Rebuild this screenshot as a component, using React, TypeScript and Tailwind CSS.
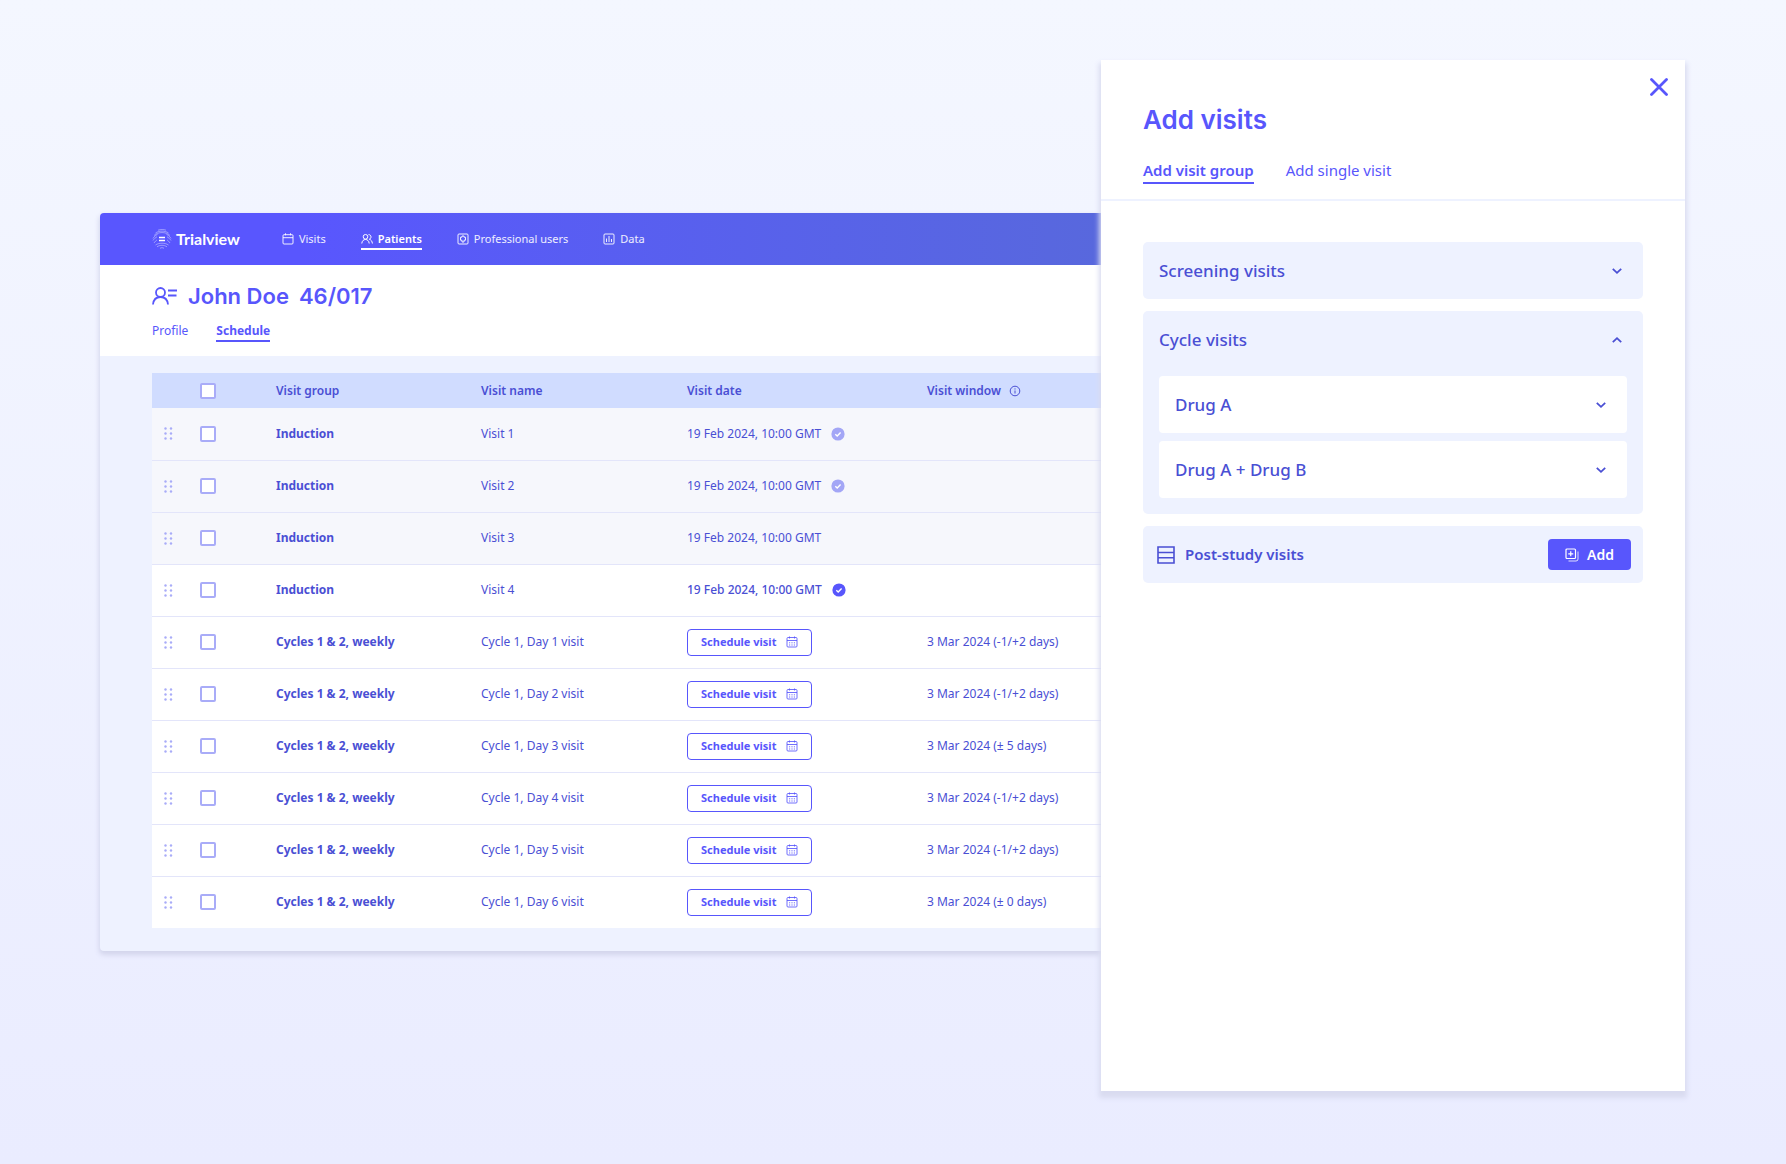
import { useState } from "react";
import type { ReactNode } from "react";

const BODY = "font-['Noto_Sans','Open_Sans',sans-serif]";

type Visit = {
  group: string;
  name: string;
  date?: string;
  status?: "past" | "confirmed";
  window?: string;
  muted?: boolean;
};

const DATE = "19 Feb 2024, 10:00 GMT";
const CYCLE = "Cycles 1 & 2, weekly";

const visits: Visit[] = [
  { group: "Induction", name: "Visit 1", date: DATE, status: "past", muted: true },
  { group: "Induction", name: "Visit 2", date: DATE, status: "past", muted: true },
  { group: "Induction", name: "Visit 3", date: DATE, muted: true },
  { group: "Induction", name: "Visit 4", date: DATE, status: "confirmed" },
  { group: CYCLE, name: "Cycle 1, Day 1 visit", window: "3 Mar 2024 (-1/+2 days)" },
  { group: CYCLE, name: "Cycle 1, Day 2 visit", window: "3 Mar 2024 (-1/+2 days)" },
  { group: CYCLE, name: "Cycle 1, Day 3 visit", window: "3 Mar 2024 (± 5 days)" },
  { group: CYCLE, name: "Cycle 1, Day 4 visit", window: "3 Mar 2024 (-1/+2 days)" },
  { group: CYCLE, name: "Cycle 1, Day 5 visit", window: "3 Mar 2024 (-1/+2 days)" },
  { group: CYCLE, name: "Cycle 1, Day 6 visit", window: "3 Mar 2024 (± 0 days)" },
];

function LogoMark() {
  return (
    <svg width="20" height="20" viewBox="0 0 20 20" fill="none" stroke="white" aria-hidden="true">
      <g strokeOpacity="0.5" strokeWidth="0.8">
        <path d="M6 1.200C8.500 0.300 12 0.300 14 1.200" />
        <path d="M3.500 4C7 1.500 13 1.500 16.500 4" />
        <path d="M2 6.500C6 2.600 14 2.600 18 6.500" />
        <path d="M1 9.500C2.500 7 4 6 5.500 5.500M19 9.500C17.500 7 16 6 14.500 5.500" />
        <path d="M1 11.500C2 10 3.500 8.500 5 7.800M19 11.500C18 10 16.500 8.500 15 7.800" />
        <path d="M2 14C3 12.500 4 11.500 5 11M18 14C17 12.500 16 11.500 15 11" />
        <path d="M3.500 16C7 13.600 13 13.600 16.500 16" />
        <path d="M5 17.800C8 15.800 12 15.800 15 17.800" />
        <path d="M8 19.300C9.500 18.500 10.500 18.500 12 19.300" />
      </g>
      <path d="M7 8.500h6M7 11.500h6" strokeWidth="1.500" />
    </svg>
  );
}

function CalendarIcon() {
  return (
    <svg width="12" height="12" viewBox="0 0 12 12" fill="none" stroke="currentColor" aria-hidden="true">
      <rect x="1" y="1.700" width="10" height="9.300" rx="1" />
      <path d="M1 4.700h10M3.500 0.300v2M8.500 0.300v2" />
    </svg>
  );
}

function PeopleIcon() {
  return (
    <svg width="12" height="12" viewBox="0 0 12 12" fill="none" stroke="currentColor" aria-hidden="true">
      <circle cx="4.500" cy="3.800" r="2.300" />
      <path d="M0.800 10.500C1 7.800 2.600 6.500 4.500 6.500S8 7.800 8.200 10.500M7.500 1.600C9.200 1.600 10 2.700 10 3.900S9.300 5.900 8.300 6.200C10 6.700 11.200 8.200 11.400 10.500" />
    </svg>
  );
}

function ProfessionalIcon() {
  return (
    <svg width="12" height="12" viewBox="0 0 12 12" fill="none" stroke="currentColor" aria-hidden="true">
      <rect x="1" y="1" width="10" height="10" rx="1" />
      <path d="M5 3h2v1.200h1.500v3H7V9H5V7.200H3.500v-3H5z" />
    </svg>
  );
}

function ChartIcon() {
  return (
    <svg width="12" height="12" viewBox="0 0 12 12" fill="none" stroke="currentColor" aria-hidden="true">
      <rect x="1" y="1" width="10" height="10" rx="1" />
      <path d="M3.500 5.500v3.500M6 3v6M8.500 6v3" />
    </svg>
  );
}

function PatientIcon() {
  return (
    <svg width="26" height="18" viewBox="0 0 26 18" fill="none" stroke="#5856fc" strokeWidth="1.800" aria-hidden="true">
      <circle cx="8.500" cy="5.500" r="4.500" />
      <path d="M1 17.500C1.500 12.500 4.500 10 8.500 10S15.500 12.500 16 17.500M16 3.500h9M16 8.500h8.500" />
    </svg>
  );
}

function GripIcon() {
  return (
    <svg width="9" height="13" viewBox="0 0 9 13" fill="#a9acf8" aria-hidden="true">
      <circle cx="1.500" cy="1.500" r="1.200" />
      <circle cx="7" cy="1.500" r="1.200" />
      <circle cx="1.500" cy="6.500" r="1.200" />
      <circle cx="7" cy="6.500" r="1.200" />
      <circle cx="1.500" cy="11.500" r="1.200" />
      <circle cx="7" cy="11.500" r="1.200" />
    </svg>
  );
}

function StatusIcon({ status }: { status: "past" | "confirmed" }) {
  return (
    <svg width="14" height="14" viewBox="0 0 14 14" fill="none" role="img" aria-label={status}>
      <circle cx="7" cy="7" r="6.600" fill={status === "past" ? "#a3a6f6" : "#5856fc"} />
      <path d="M4.300 7.200l1.900 1.800 3.400-3.500" stroke="white" strokeWidth="1.400" />
    </svg>
  );
}

function ScheduleIcon() {
  return (
    <svg width="12" height="12" viewBox="0 0 12 12" fill="none" stroke="currentColor" strokeOpacity="0.850" aria-hidden="true">
      <rect x="1" y="1.500" width="10" height="9.500" rx="1" />
      <path d="M1 4.500h10M3.500 0.500v2M8.500 0.500v2" />
      <path d="M3 6.800h1.200M5.400 6.800h1.200M7.800 6.800H9M3 9h1.200M5.400 9h1.200M7.800 9H9" />
    </svg>
  );
}

function InfoIcon() {
  return (
    <svg width="12" height="12" viewBox="0 0 12 12" fill="none" stroke="currentColor" aria-hidden="true">
      <circle cx="6" cy="6" r="4.800" />
      <path d="M6 5.500v3M6 3.400v1.100" />
    </svg>
  );
}

function Chevron({ up = false }: { up?: boolean }) {
  return (
    <svg width="12" height="8" viewBox="0 0 12 8" fill="none" stroke="currentColor" strokeWidth="1.800" aria-hidden="true">
      <path d={up ? "M1.800 6.200L6 2.200l4.200 4" : "M1.800 1.800L6 5.800l4.200-4"} />
    </svg>
  );
}

function StackIcon() {
  return (
    <svg width="18" height="18" viewBox="0 0 18 18" fill="none" stroke="#4a4fd4" strokeWidth="1.600" aria-hidden="true">
      <path d="M1 1h16v16H1zM1 6.500h16M1 11.700h16" />
    </svg>
  );
}

function AddIcon() {
  return (
    <svg width="14" height="14" viewBox="0 0 14 14" fill="none" stroke="currentColor" aria-hidden="true">
      <rect x="1" y="1" width="9.500" height="9.500" rx="1" strokeWidth="1.200" />
      <path d="M5.750 3.300v5M3.250 5.800h5" strokeWidth="1.200" />
      <path d="M13 3.500v7.500a2 2 0 0 1-2 2H3.500" strokeOpacity="0.800" />
    </svg>
  );
}

function NavItem({ icon, label, active = false }: { icon: ReactNode; label: string; active?: boolean }) {
  return (
    <a
      href="#"
      aria-current={active ? "page" : undefined}
      className={
        active
          ? "flex items-center gap-[5px] border-y-2 border-t-transparent border-b-white font-semibold text-white"
          : "flex items-center gap-[5px] border-y-2 border-transparent text-white/90"
      }
    >
      {icon}
      {label}
    </a>
  );
}

function Checkbox({ label }: { label: string }) {
  return (
    <input
      type="checkbox"
      aria-label={label}
      className="block size-4 appearance-none rounded-[2px] border-2 border-[#a9acf8] bg-white checked:bg-[#5856fc]"
    />
  );
}

function VisitRow({ visit }: { visit: Visit }) {
  return (
    <tr
      className={
        visit.muted
          ? "h-[52px] border-b border-[#e3e5fa] bg-[#f6f7fc]"
          : "h-[52px] border-b border-[#e3e5fa] bg-white last:border-b-0"
      }
    >
      <td className="pl-3">
        <button type="button" aria-label={"Move " + visit.name} className="block">
          <GripIcon />
        </button>
      </td>
      <td className="pl-4">
        <Checkbox label={"Select " + visit.name} />
      </td>
      <td className="font-bold">{visit.group}</td>
      <td>{visit.name}</td>
      <td>
        {visit.date ? (
          <span className={visit.status === "confirmed" ? "flex items-center gap-[10px] font-medium" : "flex items-center gap-[10px]"}>
            {visit.date}
            {visit.status && <StatusIcon status={visit.status} />}
          </span>
        ) : (
          <button
            type="button"
            className="flex h-[27px] items-center gap-[10px] rounded-[4px] border border-[#5856fc] bg-white px-[13px] text-[11px] font-bold text-[#5856fc]"
          >
            Schedule visit
            <ScheduleIcon />
          </button>
        )}
      </td>
      <td>{visit.window}</td>
    </tr>
  );
}

function PatientWindow() {
  return (
    <section className="mt-[153px] min-w-0 flex-1 self-start overflow-clip rounded-l-[4px] bg-[#eef2ff] shadow-[0_3px_5px_1px_#d3d5ec]">
      <header className="flex h-[52px] items-center bg-gradient-to-r from-[#5956fe] from-20% to-[#5868dd] pl-[52px]">
        <a href="#" className="flex items-center gap-1 font-['Lato',sans-serif] text-[16px] font-bold text-white">
          <LogoMark />
          Trialview
        </a>
        <nav className="ml-[42px] flex gap-[35px] text-[11px] leading-[18px]">
          <NavItem icon={<CalendarIcon />} label="Visits" />
          <NavItem icon={<PeopleIcon />} label="Patients" active />
          <NavItem icon={<ProfessionalIcon />} label="Professional users" />
          <NavItem icon={<ChartIcon />} label="Data" />
        </nav>
      </header>

      <div className="bg-white pt-[17px] pb-[14px] pl-[52px] text-[#5856fc]">
        <h1 className="flex items-center gap-[10px] font-['Inter',sans-serif] text-[22px] leading-7 font-semibold">
          <PatientIcon />
          <span>John Doe</span>
          <span>46/017</span>
        </h1>
        <nav className="mt-[11px] flex gap-7 text-[12px] leading-[19px]">
          <a href="#" className="border-b-2 border-transparent">
            Profile
          </a>
          <a href="#" aria-current="page" className="border-b-2 border-[#5856fc] font-bold">
            Schedule
          </a>
        </nav>
      </div>

      <div className="pt-[17px] pb-[23px] pl-[52px]">
        <table className="w-full table-fixed text-left text-[12px] text-[#4a4fd4]">
          <colgroup>
            <col className="w-8" />
            <col className="w-[92px]" />
            <col className="w-[205px]" />
            <col className="w-[206px]" />
            <col className="w-[240px]" />
            <col />
          </colgroup>
          <thead>
            <tr className="h-[35px] bg-[#d0dcff]">
              <td />
              <th className="pl-4">
                <Checkbox label="Select all visits" />
              </th>
              <th className="font-semibold">Visit group</th>
              <th className="font-semibold">Visit name</th>
              <th className="font-semibold">Visit date</th>
              <th className="font-semibold">
                <span className="flex items-center gap-2">
                  Visit window
                  <InfoIcon />
                </span>
              </th>
            </tr>
          </thead>
          <tbody>
            {visits.map((visit) => (
              <VisitRow key={visit.name} visit={visit} />
            ))}
          </tbody>
        </table>
      </div>
    </section>
  );
}

function AccordionButton({ label, open, onToggle }: { label: string; open: boolean; onToggle: () => void }) {
  return (
    <button
      type="button"
      aria-expanded={open}
      onClick={onToggle}
      className="flex h-[57px] w-full items-center justify-between pr-5 pl-4 text-[17px] font-medium"
    >
      {label}
      <Chevron up={open} />
    </button>
  );
}

function AddVisitsDrawer() {
  const [open, setOpen] = useState<Record<string, boolean>>({ cycle: true });
  const toggle = (key: string) => setOpen((state) => ({ ...state, [key]: !state[key] }));

  return (
    <aside className="relative w-[584px] shrink-0 bg-white text-[#4a4fd4] shadow-[0_5px_5px_2px_#d9dbf0]">
      <div className="border-b-2 border-[#eef2ff] pr-[17px] pl-[42px] text-[#5856fc]">
        <div className="flex justify-end pt-[18px]">
          <button type="button" aria-label="Close">
            <svg width="18" height="18" viewBox="0 0 18 18" fill="none" stroke="currentColor" strokeWidth="2.800" strokeLinecap="round" aria-hidden="true">
              <path d="M1.500 1.500l15 15M16.500 1.500l-15 15" />
            </svg>
          </button>
        </div>
        <h2 className="mt-2 font-['Inter',sans-serif] text-[26px] leading-8 font-semibold">Add visits</h2>
        <div role="tablist" className="mt-[22px] flex gap-8 pb-[15px] text-[15px] leading-6">
          <button type="button" role="tab" aria-selected="true" className="border-b-2 border-[#5856fc] font-semibold">
            Add visit group
          </button>
          <button type="button" role="tab" aria-selected="false" className="border-b-2 border-transparent">
            Add single visit
          </button>
        </div>
      </div>

      <div className="flex flex-col gap-3 px-[42px] pt-[41px]">
        <div className="rounded-[5px] bg-[#eef2ff]">
          <AccordionButton label="Screening visits" open={!!open.screening} onToggle={() => toggle("screening")} />
        </div>
        <div className="rounded-[5px] bg-[#eef2ff]">
          <AccordionButton label="Cycle visits" open={!!open.cycle} onToggle={() => toggle("cycle")} />
          {open.cycle && (
            <div className="flex flex-col gap-2 px-4 pt-2 pb-4">
              <div className="rounded-[4px] bg-white">
                <AccordionButton label="Drug A" open={!!open.a} onToggle={() => toggle("a")} />
              </div>
              <div className="rounded-[4px] bg-white">
                <AccordionButton label="Drug A + Drug B" open={!!open.ab} onToggle={() => toggle("ab")} />
              </div>
            </div>
          )}
        </div>
        <div className="flex h-[57px] items-center rounded-[5px] bg-[#eef2ff] pr-3 pl-[14px]">
          <StackIcon />
          <span className="ml-[10px] flex-1 text-[15px] font-semibold">Post-study visits</span>
          <button
            type="button"
            className="flex h-[31px] items-center gap-2 rounded-[4px] bg-[#5856fc] px-[17px] text-[14px] font-semibold text-white"
          >
            <AddIcon />
            Add
          </button>
        </div>
      </div>
    </aside>
  );
}

export default function App() {
  return (
    <main className={BODY + " flex min-h-screen bg-gradient-to-b from-[#f4f7ff] to-[#eaecff] pt-[60px] pr-[101px] pb-[73px] pl-[100px]"}>
      <PatientWindow />
      <AddVisitsDrawer />
    </main>
  );
}
